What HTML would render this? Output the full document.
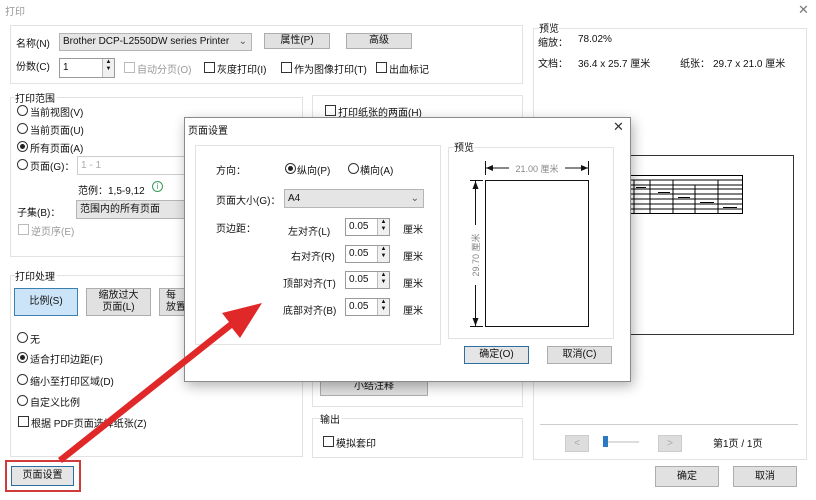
<!DOCTYPE html>
<html><head><meta charset="utf-8">
<style>
*{box-sizing:border-box;margin:0;padding:0}
body{width:816px;height:500px;overflow:hidden;background:#fff;font-family:"Liberation Sans","Noto Sans CJK SC",sans-serif;font-size:10px;color:#111;position:relative}
.a{position:absolute;white-space:nowrap}
.grp{position:absolute;border:1px solid #e2e2e2}
.btn{position:absolute;background:#e1e1e1;border:1px solid #adadad;text-align:center;font-size:10px}
.cb{position:absolute;width:11px;height:11px;border:1px solid #333;background:#fff}
.rd{position:absolute;width:11px;height:11px;border:1px solid #333;border-radius:50%;background:#fff}
.rd.on::after{content:"";position:absolute;left:2px;top:2px;width:5px;height:5px;border-radius:50%;background:#222}
.combo{position:absolute;background:#e5e5e5;border:1px solid #b5b5b5;padding-left:3px}
.spin{position:absolute;background:#fff;border:1px solid #9a9a9a;padding-left:3px}
.spin i{position:absolute;right:0;top:0;bottom:0;width:12px;border-left:1px solid #bbb;background:#f0f0f0;font-style:normal;font-size:6px;line-height:7px;text-align:center}
.gray{color:#9a9a9a}
</style></head><body>
<div class="a gray" style="left:5px;top:3px">打印</div>
<div class="a" style="left:798px;top:2px;font-size:13px;color:#777">✕</div>

<!-- top group -->
<div class="grp" style="left:10px;top:25px;width:513px;height:59px"></div>
<div class="a" style="left:16px;top:35px">名称(N)</div>
<div class="combo" style="left:59px;top:33px;width:193px;height:18px;line-height:16px">Brother DCP-L2550DW series Printer<span style="position:absolute;right:4px;color:#555">⌄</span></div>
<div class="btn" style="left:264px;top:33px;width:66px;height:16px;line-height:14px">属性(P)</div>
<div class="btn" style="left:346px;top:33px;width:66px;height:16px;line-height:14px">高级</div>
<div class="a" style="left:16px;top:58px">份数(C)</div>
<div class="spin" style="left:59px;top:58px;width:56px;height:20px;line-height:18px">1<i>▲<br>▼</i></div>
<div class="cb" style="left:124px;top:62px;border-color:#bbb"></div><div class="a gray" style="left:137px;top:61px">自动分页(O)</div>
<div class="cb" style="left:204px;top:62px"></div><div class="a" style="left:217px;top:61px">灰度打印(I)</div>
<div class="cb" style="left:281px;top:62px"></div><div class="a" style="left:294px;top:61px">作为图像打印(T)</div>
<div class="cb" style="left:376px;top:62px"></div><div class="a" style="left:389px;top:61px">出血标记</div>

<!-- print range -->
<div class="grp" style="left:10px;top:97px;width:293px;height:160px"></div>
<div class="a" style="left:15px;top:90px;background:#fff;padding-right:2px">打印范围</div>
<div class="rd" style="left:17px;top:105px"></div><div class="a" style="left:30px;top:104px">当前视图(V)</div>
<div class="rd" style="left:17px;top:123px"></div><div class="a" style="left:30px;top:122px">当前页面(U)</div>
<div class="rd on" style="left:17px;top:141px"></div><div class="a" style="left:30px;top:140px">所有页面(A)</div>
<div class="rd" style="left:17px;top:159px"></div><div class="a" style="left:30px;top:158px">页面(G)：</div>
<div class="a" style="left:77px;top:156px;width:120px;height:19px;border:1px solid #ccc;color:#aaa;padding:3px">1 - 1</div>
<div class="a" style="left:78px;top:182px">范例：1,5-9,12</div>
<div class="a" style="left:152px;top:181px;width:11px;height:11px;border:1px solid #3a9a5a;border-radius:50%;color:#3a9a5a;font-size:8px;text-align:center;line-height:9px">i</div>
<div class="a" style="left:17px;top:204px">子集(B)：</div>
<div class="combo" style="left:76px;top:200px;width:115px;height:19px;line-height:17px">范围内的所有页面</div>
<div class="cb" style="left:18px;top:224px;border-color:#bbb"></div><div class="a gray" style="left:31px;top:223px">逆页序(E)</div>

<div class="grp" style="left:312px;top:95px;width:211px;height:160px"></div>
<div class="cb" style="left:325px;top:105px"></div><div class="a" style="left:338px;top:104px">打印纸张的两面(H)</div>

<!-- print handling -->
<div class="grp" style="left:10px;top:275px;width:293px;height:182px"></div>
<div class="a" style="left:15px;top:268px;background:#fff;padding-right:2px">打印处理</div>
<div class="btn" style="left:14px;top:288px;width:64px;height:28px;line-height:26px;background:#cce4f7;border-color:#3c7fb1">比例(S)</div>
<div class="btn" style="left:86px;top:288px;width:65px;height:28px;line-height:12px;padding-top:1px">缩放过大<br>页面(L)</div>
<div class="btn" style="left:159px;top:288px;width:30px;height:28px;line-height:12px;padding-top:1px;text-align:left;padding-left:6px">每<br>放置</div>
<div class="rd" style="left:17px;top:332px"></div><div class="a" style="left:30px;top:331px">无</div>
<div class="rd on" style="left:17px;top:352px"></div><div class="a" style="left:30px;top:351px">适合打印边距(F)</div>
<div class="rd" style="left:17px;top:374px"></div><div class="a" style="left:30px;top:373px">缩小至打印区域(D)</div>
<div class="rd" style="left:17px;top:395px"></div><div class="a" style="left:30px;top:394px">自定义比例</div>
<div class="cb" style="left:18px;top:416px"></div><div class="a" style="left:31px;top:415px">根据 PDF页面选择纸张(Z)</div>

<div class="grp" style="left:312px;top:262px;width:211px;height:145px"></div>
<div class="btn" style="left:320px;top:378px;width:108px;height:18px;line-height:16px">小结注释</div>
<div class="grp" style="left:312px;top:418px;width:211px;height:40px"></div>
<div class="a" style="left:320px;top:411px;background:#fff;padding-right:2px">输出</div>
<div class="cb" style="left:323px;top:436px"></div><div class="a" style="left:336px;top:435px">模拟套印</div>

<!-- page setup button -->
<div class="a" style="left:5px;top:460px;width:76px;height:32px;border:2px solid #d03a3a"></div>
<div class="btn" style="left:11px;top:466px;width:63px;height:20px;line-height:17px;border:1px solid #2a6fa0;background:#e5e5e5">页面设置</div>

<!-- right preview -->
<div class="grp" style="left:533px;top:28px;width:274px;height:432px"></div>
<div class="a" style="left:539px;top:20px;background:#fff">预览</div>
<div class="a" style="left:538px;top:34px">缩放：</div><div class="a" style="left:578px;top:34px">78.02%</div>
<div class="a" style="left:538px;top:55px">文档：</div><div class="a" style="left:578px;top:55px">36.4 x 25.7 厘米</div>
<div class="a" style="left:680px;top:55px">纸张：</div><div class="a" style="left:713px;top:55px">29.7 x 21.0 厘米</div>
<div class="a" style="left:600px;top:155px;width:194px;height:180px;border:1px solid #333;background:#fff"></div>
<svg class="a" style="left:628px;top:175px" width="116" height="40">
<rect x="0.5" y="0.5" width="114" height="38" fill="#fff" stroke="#000"/>
<g stroke="#000" stroke-width="1">
<line x1="0" y1="5" x2="115" y2="5"/><line x1="0" y1="10" x2="115" y2="10"/><line x1="0" y1="14" x2="115" y2="14"/><line x1="0" y1="19" x2="115" y2="19"/><line x1="0" y1="24" x2="115" y2="24"/><line x1="0" y1="29" x2="115" y2="29"/><line x1="0" y1="34" x2="115" y2="34"/>
<line x1="6" y1="5" x2="6" y2="39"/><line x1="22" y1="5" x2="22" y2="39"/><line x1="45" y1="5" x2="45" y2="39"/><line x1="67" y1="10" x2="67" y2="39"/><line x1="90" y1="5" x2="90" y2="39"/></g>
<g fill="#000" font-size="3"><rect x="8" y="12" width="10" height="1"/><rect x="30" y="17" width="12" height="1"/><rect x="50" y="22" width="12" height="1"/><rect x="72" y="27" width="14" height="1"/><rect x="95" y="32" width="14" height="1"/></g>
</svg>
<div class="a" style="left:540px;top:424px;width:258px;border-top:1px solid #ccc"></div>
<div class="btn" style="left:565px;top:435px;width:24px;height:17px;color:#aaa;border-color:#ccc;background:#ddd;line-height:15px">&lt;</div>
<div class="a" style="left:605px;top:441px;width:34px;height:2px;background:#ddd"></div>
<div class="a" style="left:603px;top:436px;width:5px;height:11px;background:#2b79c2"></div>
<div class="btn" style="left:658px;top:435px;width:24px;height:17px;color:#aaa;border-color:#ccc;background:#ddd;line-height:15px">&gt;</div>
<div class="a" style="left:713px;top:435px">第1页 / 1页</div>
<div class="btn" style="left:655px;top:466px;width:64px;height:21px;line-height:19px">确定</div>
<div class="btn" style="left:733px;top:466px;width:64px;height:21px;line-height:19px">取消</div>

<!-- dialog -->
<div class="a" style="left:184px;top:117px;width:447px;height:265px;background:#fff;border:1px solid #8a8a8a;box-shadow:2px 4px 12px rgba(0,0,0,.3)"></div>
<div class="a" style="left:188px;top:122px">页面设置</div>
<div class="a" style="left:613px;top:119px;font-size:13px;color:#333">✕</div>
<div class="grp" style="left:195px;top:145px;width:246px;height:200px"></div>
<div class="a" style="left:216px;top:162px">方向：</div>
<div class="rd on" style="left:285px;top:163px"></div><div class="a" style="left:297px;top:162px">纵向(P)</div>
<div class="rd" style="left:348px;top:163px"></div><div class="a" style="left:360px;top:162px">横向(A)</div>
<div class="a" style="left:216px;top:192px">页面大小(G)：</div>
<div class="combo" style="left:284px;top:189px;width:140px;height:19px;line-height:17px">A4<span style="position:absolute;right:4px;color:#555">⌄</span></div>
<div class="a" style="left:216px;top:220px">页边距：</div>
<div class="a" style="left:288px;top:223px">左对齐(L)</div>
<div class="a" style="left:291px;top:248px">右对齐(R)</div>
<div class="a" style="left:283px;top:275px">顶部对齐(T)</div>
<div class="a" style="left:283px;top:302px">底部对齐(B)</div>
<div class="spin" style="left:345px;top:218px;width:45px;height:18px;line-height:16px">0.05<i>▲<br>▼</i></div>
<div class="spin" style="left:345px;top:245px;width:45px;height:18px;line-height:16px">0.05<i>▲<br>▼</i></div>
<div class="spin" style="left:345px;top:271px;width:45px;height:18px;line-height:16px">0.05<i>▲<br>▼</i></div>
<div class="spin" style="left:345px;top:298px;width:45px;height:18px;line-height:16px">0.05<i>▲<br>▼</i></div>
<div class="a" style="left:403px;top:221px">厘米</div>
<div class="a" style="left:403px;top:248px">厘米</div>
<div class="a" style="left:403px;top:275px">厘米</div>
<div class="a" style="left:403px;top:302px">厘米</div>

<div class="grp" style="left:448px;top:147px;width:166px;height:192px"></div>
<div class="a" style="left:454px;top:139px;background:#fff">预览</div>
<svg class="a" style="left:465px;top:160px" width="130" height="175">
<g stroke="#111" fill="#111">
<line x1="20.5" y1="1" x2="20.5" y2="15"/><line x1="123.5" y1="1" x2="123.5" y2="15"/>
<line x1="21" y1="8" x2="44" y2="8"/><line x1="100" y1="8" x2="123" y2="8"/>
<polygon points="21,8 28,5 28,11" stroke="none"/><polygon points="123,8 116,5 116,11" stroke="none"/>
<line x1="5" y1="20.5" x2="18" y2="20.5"/><line x1="5" y1="166.5" x2="18" y2="166.5"/>
<line x1="10.5" y1="21" x2="10.5" y2="65"/><line x1="10.5" y1="125" x2="10.5" y2="166"/>
<polygon points="10.5,21 7.5,29 13.5,29" stroke="none"/><polygon points="10.5,166 7.5,158 13.5,158" stroke="none"/>
<rect x="20.5" y="20.5" width="103" height="146" fill="#fff"/>
</g>
<text x="72" y="12" font-size="9" fill="#888" text-anchor="middle" font-family="Liberation Sans,Noto Sans CJK SC,sans-serif">21.00 厘米</text>
<text transform="translate(14,95) rotate(-90)" font-size="9" fill="#888" text-anchor="middle" font-family="Liberation Sans,Noto Sans CJK SC,sans-serif">29.70 厘米</text>
</svg>
<div class="btn" style="left:464px;top:346px;width:65px;height:18px;line-height:16px;border:1px solid #2a6fa0;background:#e5e5e5">确定(O)</div>
<div class="btn" style="left:547px;top:346px;width:65px;height:18px;line-height:16px">取消(C)</div>

<!-- red arrow -->
<svg class="a" style="left:0;top:0" width="816" height="500">
<polygon points="58,458 62,463 232,328 240,338 262,303 222,313 229,322" fill="#e02828"/>
</svg>
</body></html>
